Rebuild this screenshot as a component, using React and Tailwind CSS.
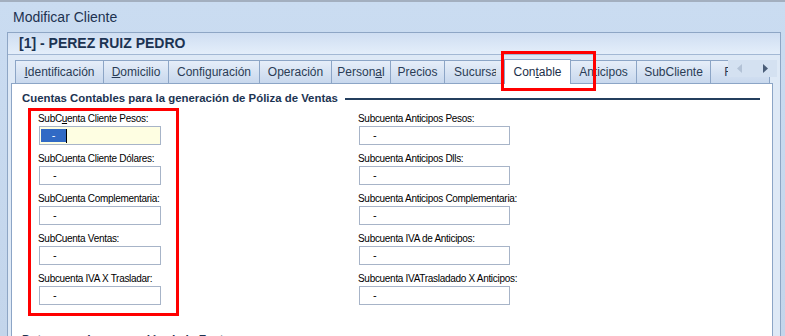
import React from 'react'

const UI = { fontFamily: '"Liberation Sans", Arial, sans-serif' }

const tabs = [
  { w: 'w-[89px]', label: <><u>I</u>dentificación</> },
  { w: 'w-[66px]', label: <><u>D</u>omicilio</> },
  { w: 'w-[92px]', label: <>Confi<u>g</u>uración</> },
  { w: 'w-[73px]', label: <>Operación</> },
  { w: 'w-[60px]', label: <>Person<u>a</u>l</> },
  { w: 'w-[55px]', label: <>Precios</> },
]

const tabsAfter = [
  { w: 'w-[67px]', label: <>Anticipos</> },
  { w: 'w-[75px]', label: <>SubCliente</> },
  { w: 'w-[60px]', label: <>Fiscal</> },
]

const leftFields = [
  { label: <>SubC<u>u</u>enta Cliente Pesos:</>, active: true },
  { label: <>SubCuenta Cliente Dólares:</> },
  { label: <>SubCuenta Complementaria:</> },
  { label: <>SubCuenta Ventas:</> },
  { label: <>Subcuenta IVA X Trasladar:</> },
]

const rightFields = [
  { label: <>Subcuenta Anticipos Pesos:</> },
  { label: <>Subcuenta Anticipos Dlls:</> },
  { label: <>Subcuenta Anticipos Complementaria:</> },
  { label: <>Subcuenta IVA de Anticipos:</> },
  { label: <>Subcuenta IVATrasladado X Anticipos:</> },
]

const Tab = ({ w, label }) => (
  <div className={`${w} h-[23px] shrink-0 flex items-center justify-center whitespace-nowrap overflow-hidden border border-b-0 border-[#8ca5c6] -ml-px first:ml-0 bg-gradient-to-b from-[#e6eef9] to-[#c8d8ed] text-[12px] text-[#2a3c55]`}>
    {label}
  </div>
)

const Field = ({ label, active, inputW }) => (
  <div className="flex flex-col">
    <div className="h-[15px] flex items-center text-[10px] tracking-[-0.3px] text-black whitespace-nowrap">{label}</div>
    <div className={`${inputW} ml-px h-[19px] border border-[#a7b4c8] flex items-center text-[11px] ${active ? 'bg-[#fefee2]' : 'bg-white'}`}>
      {active ? (
        <>
          <span className="ml-[1px] w-[25px] h-[13px] bg-[#316ac5] text-white flex items-center justify-center leading-none">-</span>
          <span className="w-px h-[14px] bg-black"></span>
        </>
      ) : (
        <span className="ml-[13px] leading-none">-</span>
      )}
    </div>
  </div>
)

export default function App() {
  return (
    <div className="w-[785px] h-[336px] overflow-hidden relative bg-gradient-to-b from-[#cadcf1] to-[#c3d5eb] border-t-2 border-[#a3afbf]" style={UI}>
      <div className="h-[30px] pl-[13px] flex items-center text-[14px] text-[#1d3250]">Modificar Cliente</div>

      <div className="relative ml-[7px] mr-[4px] h-[310px] border border-[#8ea6c5] bg-[#dee9f6]">
        <div className="h-[22px] flex items-center pl-[11px] bg-gradient-to-b from-[#cfdef2] to-[#e4eefa] border-b border-[#a3b8d4] text-[14px] font-bold text-[#1c3352]">
          [1] - PEREZ RUIZ PEDRO
        </div>

        <div className="flex items-end pl-[7px] pt-[4px] h-[28px]">
          {tabs.map((t, i) => <Tab key={i} {...t} />)}
          <div className="w-[63px] h-[23px] shrink-0 -ml-px flex items-center pl-[9px] border border-b-0 border-[#8ca5c6] bg-gradient-to-b from-[#e6eef9] to-[#c8d8ed] text-[12px] text-[#2a3c55]">
            <span className="w-[42px] overflow-hidden whitespace-nowrap">Sucursal</span>
          </div>
          <div className="relative z-10 -ml-[3px] -mb-px w-[67px] h-[25px] shrink-0 flex items-center justify-center border border-b-0 border-[#8ca5c6] bg-white text-[12px] text-[#1c2f4a]">
            Con<u>t</u>able
          </div>
          {tabsAfter.map((t, i) => <Tab key={i} {...t} />)}
        </div>

        <div className="absolute left-[720px] top-[27px] w-[49px] h-[17px] bg-[#d4e1f1] flex items-center justify-around z-20">
          <svg width="6" height="9" viewBox="0 0 6 9"><path d="M5 0 L0 4.5 L5 9 Z" fill="#b3c2d6" /></svg>
          <svg width="6" height="9" viewBox="0 0 6 9"><path d="M1 0 L6 4.5 L1 9 Z" fill="#4a5d78" /></svg>
        </div>

        <div className="ml-[3px] mr-[7px] h-[260px] bg-white border border-b-0 border-[#8ca5c6] pl-[10px]">
          <div className="flex items-center h-[16px] mt-[7px]">
            <span className="text-[11.4px] font-bold text-[#1c3352] whitespace-nowrap">Cuentas Contables para la generación de Póliza de Ventas</span>
            <span className="ml-[7px] w-[415px] h-[2px] bg-[#243f5e]"></span>
          </div>

          <div className="flex mt-px">
            <div className="ml-[6px] w-[151px] h-[208px] border-[3px] border-[#ff0000] pl-[7px] flex flex-col gap-[6px]">
              {leftFields.map((f, i) => <Field key={i} {...f} inputW="w-[122px]" />)}
            </div>
            <div className="ml-[179px] pt-[3px] flex flex-col gap-[6px]">
              {rightFields.map((f, i) => <Field key={i} {...f} inputW="w-[151px]" />)}
            </div>
          </div>

          <div className="mt-[15px] text-[12px] font-bold text-[#1c3352]">Datos para la generación de la Factura</div>
        </div>

        <div className="absolute left-[493px] top-[18px] w-[95px] h-[40px] border-[3px] border-[#ff0000] z-30 pointer-events-none"></div>
      </div>
    </div>
  )
}
